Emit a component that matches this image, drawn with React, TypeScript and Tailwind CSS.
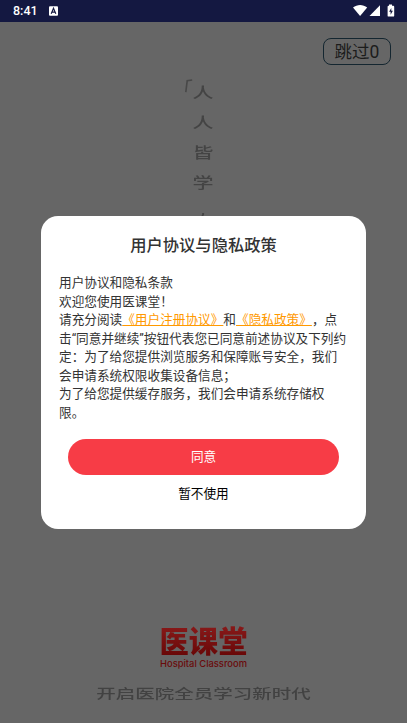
import React from 'react';

const verse = ['人', '人', '皆', '学'];

const StatusIcons: React.FC = () => (
    <svg className="w-11 h-4" viewBox="0 0 44 16" fill="#fff">
        <path d="M0 4.6C4.2 1.1 10 1.1 14.2 4.6L7.1 13z" />
        <path d="M16.5 13H27V2.2z" />
        <path fillRule="evenodd" d="M36 1.5h3v1.3h1.3q.9 0 .9.9v9q0 .9-.9.9h-4.8q-.9 0-.9-.9v-9q0-.9.9-.9h.5zM38.3 5l-2.2 3.8h1.5v2.9l2.3-4h-1.6z" />
    </svg>
);

const StatusBar: React.FC = () => (
    <div className="h-[22px] bg-[#141841] flex items-center text-white">
        <span className="ml-[13px] w-9 pt-px text-[12.5px] font-medium leading-none">8:41</span>
        <svg className="w-[9px] h-[10px] shrink-0" viewBox="0 0 9 10">
            <rect y=".3" width="9" height="9.4" rx="1" fill="#fff" />
            <path d="M2.2 7.7 4.5 2.3 6.8 7.7M3.2 6.1h2.6" fill="none" stroke="#141841" strokeWidth="1.2" />
        </svg>
        <div className="ml-auto mr-[10px]">
            <StatusIcons />
        </div>
    </div>
);

const Splash: React.FC = () => (
    <div className="relative h-[701px]">
        <div className="flex justify-end pt-4 pr-4">
            <button className="w-[68px] h-[27px] pt-0.5 rounded-[8px] border border-[#142630] text-[17.5px] leading-none text-[#1c1c1c]">
                跳过0
            </button>
        </div>

        <div className="absolute left-[192px] top-[56px] w-[22px] flex flex-col items-center font-medium text-[#444]">
            <svg className="absolute -left-2 top-px w-[9px] h-[14px]" viewBox="0 0 9 14" fill="none" stroke="#484848" strokeWidth="1.6">
                <path d="M8.2 1 3.2 1.8 1.8 13.2" />
            </svg>
            {verse.map((char, i) => (
                <span key={i} className="h-[30px] text-[21px] leading-[30px] scale-y-[0.7]">{char}</span>
            ))}
            <span className="w-5 h-[30px] pl-[8px] text-[18px] leading-[22px] scale-y-[0.72]">,</span>
        </div>

        <div className="absolute inset-x-0 top-[602px] flex flex-col items-center">
            <div className="h-[36px] text-[29.3px] leading-[36px] font-black whitespace-nowrap bg-linear-to-b from-[#8a1a1a] to-[#640505] bg-clip-text text-transparent">
                医课堂
            </div>
            <div className="h-3 -mt-0.5 text-[9.4px] leading-3 font-medium font-[Inter] text-[#6a0b0b] whitespace-nowrap">Hospital Classroom</div>
            <div className="mt-[12px] h-6 text-[19.5px] leading-6 font-medium text-[#424242] whitespace-nowrap scale-y-[0.66]">
                开启医院全员学习新时代
            </div>
        </div>
    </div>
);

const PolicyDialog: React.FC = () => (
    <div className="w-[325px] h-[313.5px] rounded-[17px] bg-white flex flex-col items-center">
        <h1 className="mt-[18.5px] h-6 text-[16.3px] leading-6 font-medium text-[#333]">用户协议与隐私政策</h1>

        <div className="mt-[16px] w-[289px] text-[12.65px] leading-[18.5px] text-[#333] whitespace-nowrap [text-spacing-trim:space-all]">
            <p>用户协议和隐私条款</p>
            <p>欢迎您使用医课堂！</p>
            <p>
                请充分阅读<a className="text-[#ff9900] underline">《用户注册协议》</a>和<a className="text-[#ff9900] underline">《隐私政策》</a>，点
            </p>
            <p>击“同意并继续”按钮代表您已同意前述协议及下列约</p>
            <p>定：为了给您提供浏览服务和保障账号安全，我们</p>
            <p>会申请系统权限收集设备信息；</p>
            <p>为了给您提供缓存服务，我们会申请系统存储权</p>
            <p>限。</p>
        </div>

        <button className="mt-[17px] w-[271px] h-9 shrink-0 rounded-full bg-[#f73c46] text-white text-[12.63px]">同意</button>
        <button className="mt-[10px] h-[18px] text-[12.63px] leading-[18px] text-black">暂不使用</button>
    </div>
);

export default function App() {
    return (
        <div
            lang="zh-CN"
            className="relative w-[407px] h-[723px] overflow-hidden bg-[#666] font-[Roboto,'Noto_Sans_CJK_SC',sans-serif]"
        >
            <StatusBar />
            <Splash />
            <div className="absolute left-[41px] top-[215.5px]">
                <PolicyDialog />
            </div>
        </div>
    );
}
